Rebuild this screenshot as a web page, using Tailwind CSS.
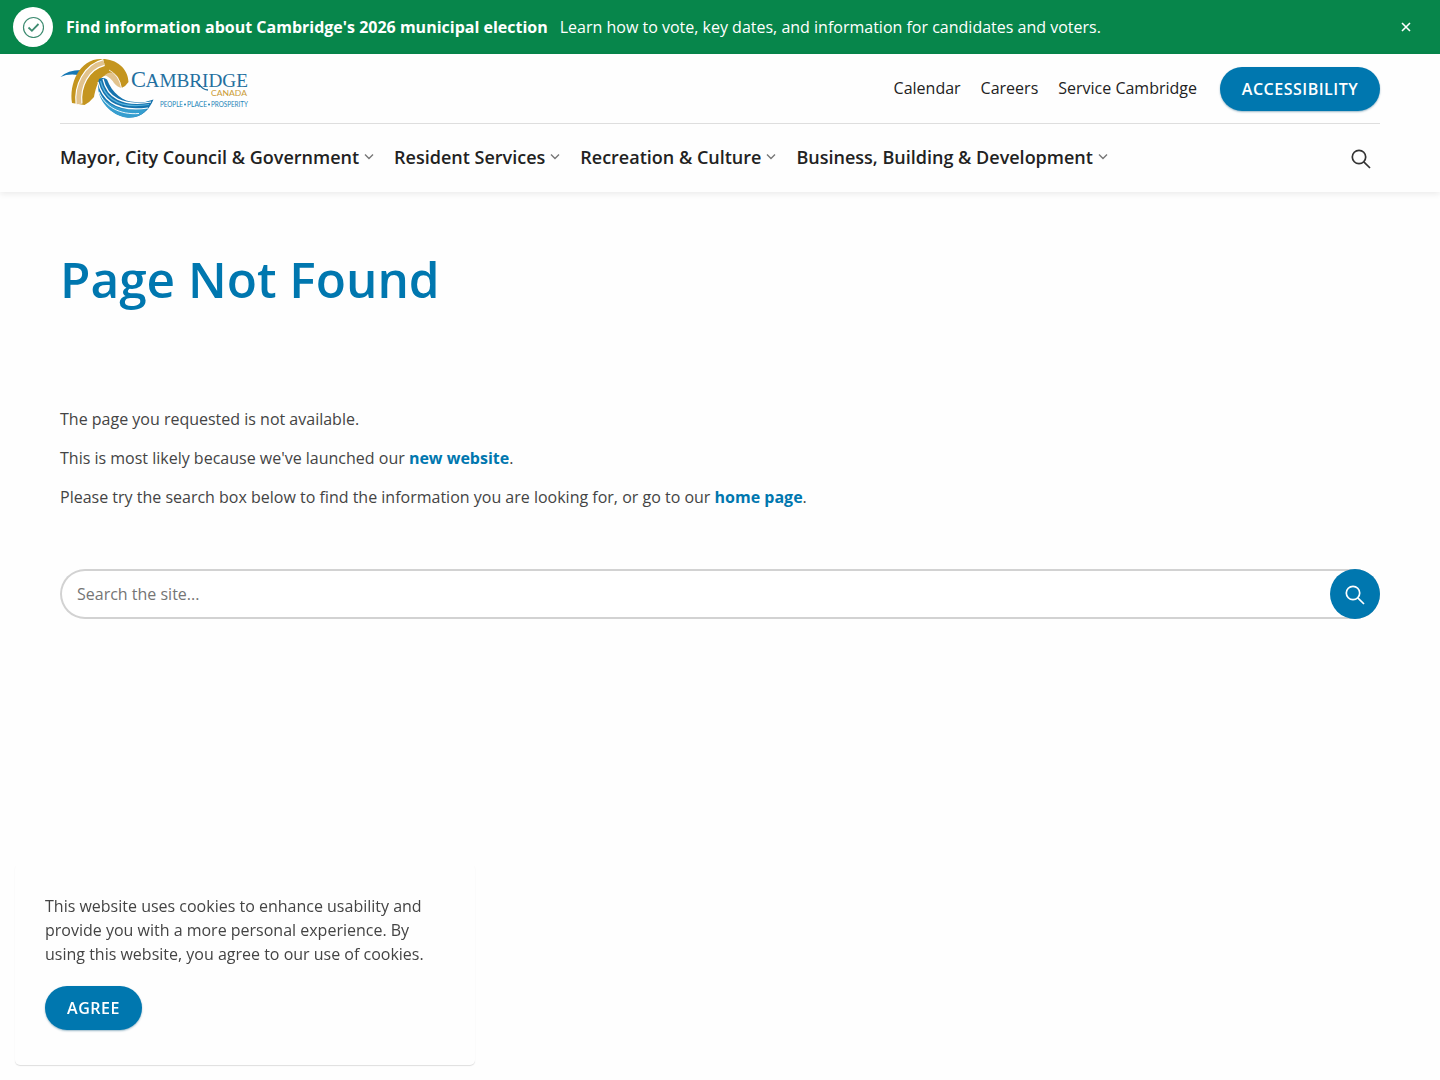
<!DOCTYPE html>
<html lang="en">
<head>
    <meta charset="UTF-8">
    <meta name="viewport" content="width=device-width, initial-scale=1.0">
    <title>Page Not Found - City of Cambridge</title>
    <script src="https://cdn.jsdelivr.net/npm/@tailwindcss/browser@4"></script>
</head>
<body class="min-h-screen overflow-hidden bg-[#fefefe] font-['Open_Sans',sans-serif] text-base text-[#444]">
    <!-- Alert banner -->
    <div class="flex h-[54px] items-center bg-[#07864b] pl-[13px] pr-7 text-white">
        <span class="flex size-10 shrink-0 items-center justify-center rounded-full bg-white">
            <svg class="size-[22px]" viewBox="0 0 22 22" fill="none" stroke="#3d8b70" stroke-width="1.2">
                <circle cx="11.500" cy="11.500" r="10" />
                <path stroke-width="1.8" d="M6.500 11.500l3.400 3.300L16.500 8" />
            </svg>
        </span>
        <p class="ml-[13px] font-bold">Find information about Cambridge's 2026 municipal election</p>
        <p class="ml-3">Learn how to vote, key dates, and information for candidates and voters.</p>
        <button class="ml-auto" aria-label="Close">
            <svg class="size-3" viewBox="0 0 12 12" stroke="#fff" stroke-width="1.6"><path d="M2 2l8 8M10 2l-8 8" /></svg>
        </button>
    </div>

    <!-- Header -->
    <header class="h-[138px] px-[60px] shadow-[0_2px_6px_rgba(0,0,0,0.08)]">
        <div class="flex h-[70px] items-center border-b border-[#dedede]">
            <a href="#" aria-label="Cambridge Canada">
                <svg class="h-[62px] w-[190px] overflow-visible" viewBox="60 58 190 62">
                    <!-- bridge -->
                    <path fill="#1678b5" d="M60.500 77Q68 69.500 83 70L78 75Q68 73.500 60.500 77Z" />
                    <path fill="#c4951f" d="M72 103C69 84 79 59 101 59C116 58.500 128 68 128.500 82Q126 86 121.500 88C117 77 109 73 104 76C97 80 95 92 94 97Q90 102 84.500 105Z" />
                    <path fill="none" stroke="#fff" stroke-width="7" d="M79 104C77 86 86 67 104 62.500" />
                    <path fill="none" stroke="#e2c38d" stroke-width="4.800" d="M79 104C77 86 86 67 104 62.500" />
                    <path fill="#e2c38d" d="M105 75Q111 69 118 77Q121 82 121.500 88Q117 87 114 83Q111 78 105 75Z" />
                    <path fill="none" stroke="#fff" stroke-width="0.800" d="M109 70Q119 75 121.500 88" />
                    <!-- river -->
                    <path fill="#1673ae" d="M99 79Q103 77 107 79.500C112 93 123 102 135 102Q145 103 153.500 99.500C149 110 142 118 128 117.500C112 116 98 101 98 83Z" />
                    <path fill="#369ecf" d="M98 86C101 103 119 114 148 107.500Q141 119 126 117.500C111 115 98 101 98 86Z" />
                    <path fill="none" stroke="#fff" stroke-width="1.200" d="M103 79C107 97 122 107 151 102M98 82C103 102 119 112 148 108" />
                    <path fill="none" stroke="#fff" stroke-width="0.900" d="M99 92C105 107 120 115 139 113.500" />
                    <path fill="none" stroke="#58b3dc" stroke-width="1.200" d="M100.500 81C105 99 120 109 149 104.500" />
                    <!-- wordmark -->
                    <text y="87" font-family="Liberation Serif" fill="#236f9f"><tspan x="131" font-size="23" textLength="15" lengthAdjust="spacingAndGlyphs">C</tspan><tspan x="145.500" font-size="19.500" textLength="102.500" lengthAdjust="spacingAndGlyphs">AMBRIDGE</tspan></text>
                    <path fill="none" stroke="#236f9f" stroke-width="1.300" d="M199 84Q202 89.500 208 90" />
                    <text x="211" y="96" font-family="Lato" font-size="8" fill="#ca9b35" textLength="36" lengthAdjust="spacingAndGlyphs">CANADA</text>
                    <text y="107" font-family="Lato" font-size="7" fill="#2385b8"><tspan x="160" textLength="23" lengthAdjust="spacingAndGlyphs">PEOPLE</tspan><tspan x="187" textLength="20" lengthAdjust="spacingAndGlyphs">PLACE</tspan><tspan x="211" textLength="37" lengthAdjust="spacingAndGlyphs">PROSPERITY</tspan></text>
                    <circle cx="185" cy="104.500" r="1" fill="#2385b8" />
                    <circle cx="209" cy="104.500" r="1" fill="#2385b8" />
                </svg>
            </a>
            <nav class="ml-auto flex items-center gap-5 pb-0.5 text-[#222]">
                <a href="#">Calendar</a>
                <a href="#">Careers</a>
                <a href="#">Service Cambridge</a>
            </nav>
            <a href="#" class="ml-[23px] flex h-11 w-40 items-center justify-center rounded-full bg-[#0077af] font-semibold tracking-[0.5px] text-white shadow-[0_1px_2px_rgba(0,80,120,0.4)]">ACCESSIBILITY</a>
        </div>
        <div class="flex h-[68px] items-center">
            <nav class="flex gap-5 pb-0.5 text-lg font-semibold text-[#222]">
                <a href="#" class="flex items-center gap-[5px]">Mayor, City Council &amp; Government
                    <svg class="h-2.5 w-2.5" viewBox="0 0 10 10" fill="none" stroke="#777" stroke-width="1.4"><path d="M1 2.500l4 4 4-4" /></svg>
                </a>
                <a href="#" class="flex items-center gap-[5px]">Resident Services
                    <svg class="h-2.5 w-2.5" viewBox="0 0 10 10" fill="none" stroke="#777" stroke-width="1.4"><path d="M1 2.500l4 4 4-4" /></svg>
                </a>
                <a href="#" class="flex items-center gap-[5px]">Recreation &amp; Culture
                    <svg class="h-2.5 w-2.5" viewBox="0 0 10 10" fill="none" stroke="#777" stroke-width="1.4"><path d="M1 2.500l4 4 4-4" /></svg>
                </a>
                <a href="#" class="flex items-center gap-[5px]">Business, Building &amp; Development
                    <svg class="h-2.5 w-2.5" viewBox="0 0 10 10" fill="none" stroke="#777" stroke-width="1.4"><path d="M1 2.500l4 4 4-4" /></svg>
                </a>
            </nav>
            <button class="ml-auto mr-[9px] pt-px" aria-label="Search">
                <svg class="size-5" viewBox="0 0 20 20" fill="none" stroke="#333" stroke-width="1.7"><circle cx="8" cy="8" r="6.700" /><path d="M12.800 12.800l6.200 6.200" /></svg>
            </button>
        </div>
    </header>

    <!-- Content -->
    <main class="px-[60px] pt-[53px]">
        <h1 class="text-[49.5px] leading-[68px] font-semibold text-[#0077af]">Page Not Found</h1>
        <div class="mt-[94px] space-y-[15px]">
            <p>The page you requested is not available.</p>
            <p>This is most likely because we've launched our <a href="#" class="font-bold text-[#0077af]">new website</a>.</p>
            <p>Please try the search box below to find the information you are looking for, or go to our <a href="#" class="font-bold text-[#0077af]">home page</a>.</p>
        </div>
        <form class="mt-[60px] flex h-[50px] items-center justify-between rounded-full bg-white pl-[17px] text-[#757575] inset-ring-2 inset-ring-[#d2d2d2]">
            <span>Search the site...</span>
            <button type="button" class="flex size-[50px] items-center justify-center rounded-full bg-[#0077af] pt-px" aria-label="Search">
                <svg class="size-5" viewBox="0 0 20 20" fill="none" stroke="#fff" stroke-width="1.7"><circle cx="8" cy="8" r="6.700" /><path d="M12.800 12.800l6.200 6.200" /></svg>
            </button>
        </form>
    </main>

    <!-- Cookie notice -->
    <aside class="fixed bottom-[15px] left-[15px] w-[460px] rounded-[5px] bg-[#fefefe] px-[30px] pt-[30px] pb-[35px] shadow-[0_1px_1px_rgba(0,0,0,0.13)]">
        <p class="w-[390px]">This website uses cookies to enhance usability and provide you with a more personal experience. By using this website, you agree to our use of cookies.</p>
        <button class="mt-5 block h-11 w-[97px] rounded-full bg-[#0077af] font-semibold tracking-[0.5px] text-white shadow-[0_1px_2px_rgba(0,80,120,0.4)]">AGREE</button>
    </aside>
</body>
</html>
